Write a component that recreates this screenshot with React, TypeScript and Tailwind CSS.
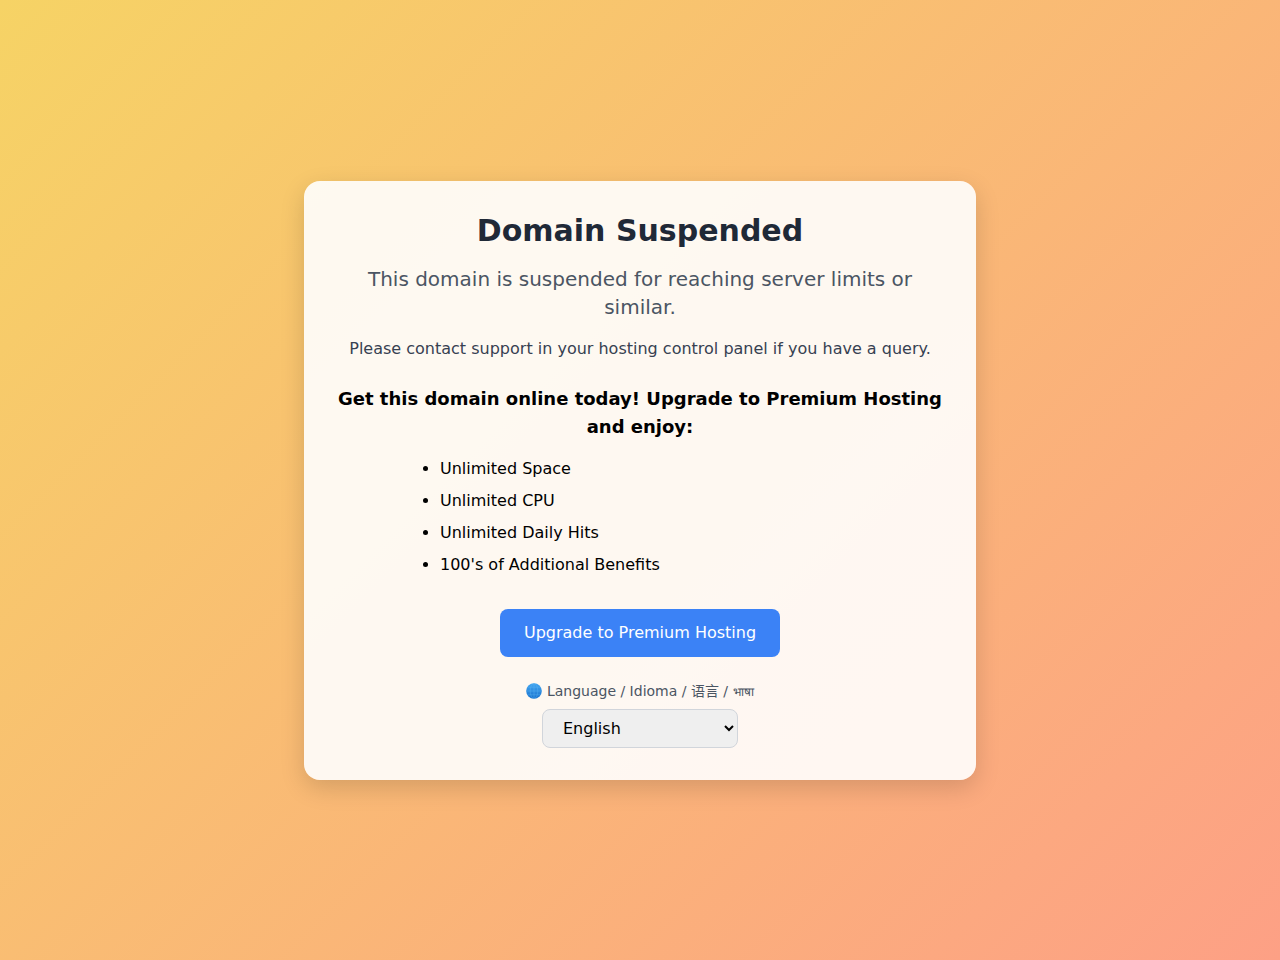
import { useState } from "react";

const benefits = [
  "Unlimited Space",
  "Unlimited CPU",
  "Unlimited Daily Hits",
  "100's of Additional Benefits",
];

const languages = [
  { code: "en", label: "English" },
  { code: "es", label: "Español" },
  { code: "zh", label: "中文" },
  { code: "hi", label: "हिन्दी" },
];

function Globe() {
  return (
    <svg className="inline-block h-4 w-4 align-text-bottom" viewBox="0 0 16 16" aria-hidden="true">
      <defs>
        <linearGradient id="globe" x1="0" y1="0" x2="0" y2="1">
          <stop offset="0" stopColor="#42a5f0" />
          <stop offset="1" stopColor="#1a73cf" />
        </linearGradient>
      </defs>
      <circle cx="8" cy="8" r="7.8" fill="url(#globe)" />
      <g fill="none" stroke="#5cb6f2" strokeWidth="0.4">
        <ellipse cx="8" cy="8" rx="3.8" ry="7.6" />
        <path d="M8 0.2v15.6M0.2 8h15.6M1.6 4.2h12.8M1.6 11.8h12.8" />
      </g>
    </svg>
  );
}

export default function App() {
  const [language, setLanguage] = useState("en");

  return (
    <div className="flex min-h-screen items-center justify-center bg-[linear-gradient(135deg,#f6d365,#fda085)] font-['DejaVu_Sans','Noto_Sans_CJK_SC',sans-serif] text-black">
      <main className="w-full max-w-2xl rounded-2xl bg-white/90 p-8 text-center shadow-[0_8px_24px_rgba(0,0,0,0.15)]">
        <h1 className="mb-4 text-3xl font-bold text-[#1f2937]">Domain Suspended</h1>
        <p className="mb-4 text-xl text-[#4b5563]">
          This domain is suspended for reaching server limits or similar.
        </p>
        <p className="mb-6 text-base text-[#374151]">
          Please contact support in your hosting control panel if you have a query.
        </p>

        <h2 className="mb-4 text-lg font-semibold">
          Get this domain online today! Upgrade to Premium Hosting and enjoy:
        </h2>
        <ul className="mx-auto mb-8 max-w-md list-disc space-y-2 pl-6 text-left">
          {benefits.map((benefit) => (
            <li key={benefit}>{benefit}</li>
          ))}
        </ul>

        <a href="#upgrade" className="inline-block rounded-lg bg-[#3b82f6] px-6 py-3 text-white">
          Upgrade to Premium Hosting
        </a>

        <div className="mt-6">
          <label htmlFor="language" className="mb-2 block text-sm text-[#4b5563]">
            <Globe /> Language / Idioma / 语言 / <span lang="hi" className="text-xs">भाषा</span>
          </label>
          <select
            id="language"
            value={language}
            onChange={(e) => setLanguage(e.target.value)}
            className="w-49 rounded-lg border border-[#d1d5db] bg-[#efefef] px-4 py-2"
          >
            {languages.map(({ code, label }) => (
              <option key={code} value={code}>{label}</option>
            ))}
          </select>
        </div>
      </main>
    </div>
  );
}
